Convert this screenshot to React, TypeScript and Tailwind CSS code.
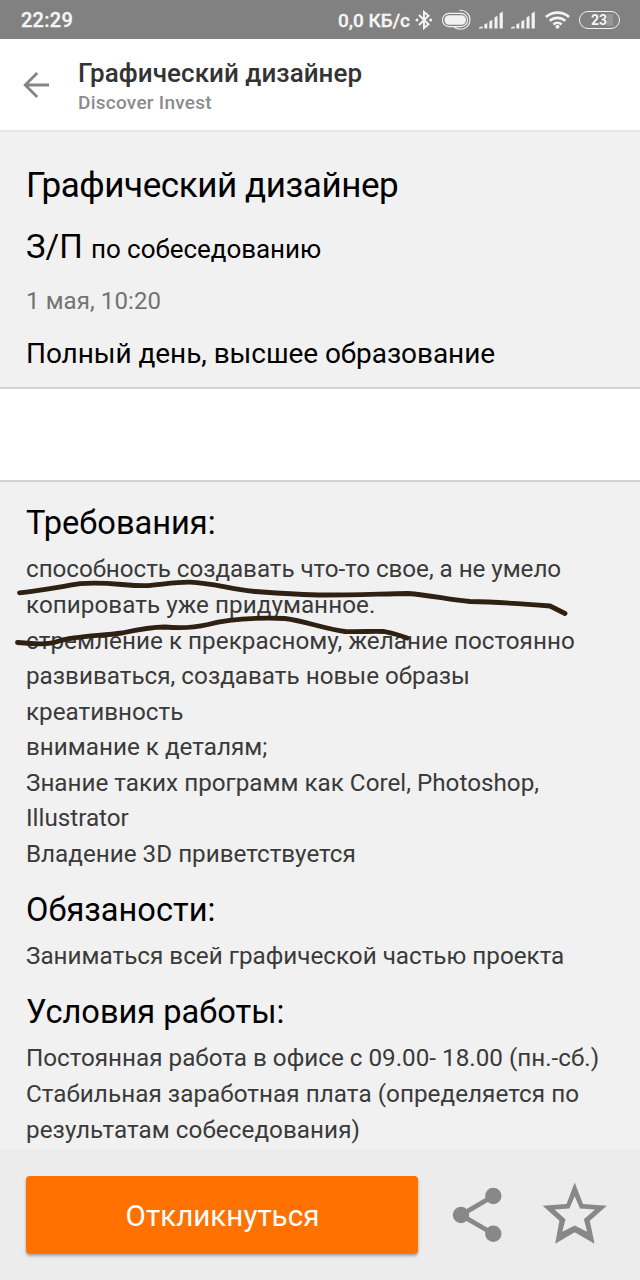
interface LineGroup {
    lines: string[];
    lineClass: string;
}

interface VacancySection {
    title: string;
    groups: LineGroup[];
}

const SECTIONS: VacancySection[] = [
    {
        title: "Требования:",
        groups: [
            {
                lines: ["способность создавать что-то свое, а не умело"],
                lineClass: "leading-[36px] tracking-[-0.06px]",
            },
            {
                lines: [
                    "копировать уже придуманное.",
                    "стремление к прекрасному, желание постоянно",
                ],
                lineClass: "leading-[36px] tracking-[0.04px]",
            },
            {
                lines: [
                    "развиваться, создавать новые образы",
                    "креативность",
                    "внимание к деталям;",
                    "Знание таких программ как Corel, Photoshop,",
                    "Illustrator",
                    "Владение 3D приветствуется",
                ],
                lineClass: "leading-[35.5px]",
            },
        ],
    },
    {
        title: "Обязаности:",
        groups: [
            {
                lines: ["Заниматься всей графической частью проекта"],
                lineClass: "leading-[36px]",
            },
        ],
    },
    {
        title: "Условия работы:",
        groups: [
            {
                lines: ["Постоянная работа в офисе с 09.00- 18.00 (пн.-сб.)"],
                lineClass: "leading-[36px]",
            },
            {
                lines: [
                    "Стабильная заработная плата (определяется по",
                    "результатам собеседования)",
                ],
                lineClass: "leading-[36px] tracking-[0.05px]",
            },
        ],
    },
];

function SignalIcon() {
    return (
        <svg className="h-[18px] w-6 shrink-0" viewBox="0 0 24 18" fill="#f2f2f2">
            <path d="M0 17.5v-1l3.5-1.5v2.5z" />
            <path d="M5.3 13.5l3-1.5v5.5h-3zM10.3 10.5l3-1.8v8.8h-3zM15.5 6.5l3-1.8v12.8h-3zM20.6 2.5L23.8.5v17h-3.2z" />
        </svg>
    );
}

function StatusBar() {
    return (
        <div className="flex h-[39px] items-center bg-[#818181] pl-[21px] pr-[20px] text-[#f5f5f5]">
            <span className="text-[20px] font-medium leading-none tracking-[0.25px] [-webkit-text-stroke:0.3px_#f5f5f5]">22:29</span>
            <div className="ml-auto flex items-center">
                <span className="pt-px text-[19px] font-medium leading-none [-webkit-text-stroke:0.3px_#f5f5f5]">0,0 КБ/с</span>
                <svg className="ml-[5px] h-5 w-[18px] shrink-0" viewBox="0 0 18 20" fill="none" stroke="#f2f2f2" strokeWidth="2">
                    <path d="M4 5l9.5 9.2L9 18V2l4.5 3.8L4 15" />
                    <circle cx="2" cy="10" r="1.5" fill="#f2f2f2" stroke="none" />
                    <circle cx="15.7" cy="10" r="1.5" fill="#f2f2f2" stroke="none" />
                </svg>
                <svg className="ml-[8px] h-[22px] w-[30px] shrink-0" viewBox="0 0 30 22" fill="none" stroke="#f2f2f2">
                    <rect x="3.5" y="6.2" width="21.5" height="9.6" rx="4.8" fill="#f2f2f2" stroke="none" />
                    <path d="M8 4.4h12a6.6 6.6 0 010 13.2H8A6.6 6.6 0 018 4.4z" strokeWidth="1.1" />
                    <path d="M18.5 1.3c6-.4 10.5 4 10.5 9.5 0 5.3-4 9.4-9.2 9.4-3.2 0-5.3-.8-7-2.6" strokeWidth="1.1" />
                </svg>
                <div className="ml-[8px] flex gap-[8px]">
                    <SignalIcon />
                    <SignalIcon />
                </div>
                <svg className="ml-[10px] h-[18px] w-[25px] shrink-0" viewBox="0 0 25 18" fill="none" stroke="#f2f2f2" strokeWidth="2.7">
                    <path d="M.9 5.9C7.5.1 17.5.1 24.1 5.9" />
                    <path d="M4.7 9.8c4.5-4 11.1-4 15.6 0" />
                    <path d="M8.4 13.5c2.4-2.1 5.8-2.1 8.2 0" />
                    <circle cx="12.5" cy="15.7" r="2" fill="#f2f2f2" stroke="none" />
                </svg>
                <div className="ml-[9px] flex h-[18px] w-[41px] shrink-0 items-center justify-center rounded-full border-[1.5px] border-[#f2f2f2] pr-px">
                    <span className="text-[14px] font-bold leading-none">23</span>
                    <span className="-mr-[6px] h-3 w-[6px] bg-[#969696]" />
                </div>
            </div>
        </div>
    );
}

function AppHeader() {
    return (
        <header className="flex h-[93px] border-b-2 border-[#e6e6e6] bg-white pl-[23px]">
            <button type="button" className="mt-[33px] h-[26px] w-[27px]" aria-label="Назад">
                <svg className="h-[26px] w-[27px]" viewBox="0 0 27 26" fill="none" stroke="#868686" strokeWidth="2.8">
                    <path d="M26 13H2.5M14.2 1L2.2 13l12 12" />
                </svg>
            </button>
            <div className="ml-[28px] pt-[19px]">
                <h1 className="text-[26px] font-medium leading-[30px] tracking-[0.05px] text-[#333]">Графический дизайнер</h1>
                <p className="mt-[4px] text-[19px] font-medium leading-[22px] tracking-[0.25px] text-[#8c8c8c]">Discover Invest</p>
            </div>
        </header>
    );
}

function VacancySummary() {
    return (
        <section className="h-[257px] border-b-2 border-[#d2d2d2] bg-[#f1f1f1] pl-[26px] pt-[32px] text-black">
            <h2 className="text-[35px] leading-[44px] tracking-[-0.43px]">Графический дизайнер</h2>
            <p className="mt-[19px] text-[33px] leading-[40px]">
                З/П <span className="text-[26px] tracking-[-0.05px]">по собеседованию</span>
            </p>
            <p className="mt-[16px] text-[24px] leading-[32px] tracking-[0.1px] text-[#737373]">1 мая, 10:20</p>
            <p className="mt-[19px] text-[28px] leading-[36px] tracking-[-0.06px]">Полный день, высшее образование</p>
        </section>
    );
}

// strokes drawn by hand over the first requirements
function PenMarks() {
    return (
        <svg
            className="pointer-events-none absolute left-0 top-0 h-[188px] w-[640px]"
            viewBox="0 482 640 188"
            fill="none"
            stroke="#2f2014"
            strokeWidth="4.8"
            strokeLinecap="round"
            strokeLinejoin="round"
        >
            <path d="M19.5 592.8C42 590.5 62 586.5 80 583.7C108 581.5 125 586 145 585.7C162 584.5 175 582 190 582.2C212 583 232 589.5 255 591.5C282 593.5 300 594.8 325 595C350 595 380 594 408 593.5C430 595 450 600 470 601.5C498 602 525 604 550 606L565 613.5" />
            <path d="M17.5 642.5C35 644 48 645 59 641C76 636 100 636 122 633C138 629.5 150 627 165 627C182 628.5 195 627.5 208 624.5C230 618.5 255 617.5 285 618.5C305 621 325 629 345 631.5C360 632 372 631 384 631.5Q397 634 407 638" />
        </svg>
    );
}

function VacancyDetails() {
    return (
        <section className="relative h-[669px] overflow-hidden border-t-2 border-[#d2d2d2] bg-[#f1f1f1] pl-[26px] pt-[21px]">
            {SECTIONS.map((section) => (
                <div key={section.title} className="mb-[18px]">
                    <h3 className="mb-[8px] text-[32.6px] leading-[40px] text-black">{section.title}</h3>
                    {section.groups.map((group) => (
                        <div key={group.lines[0]} className={`text-[24.24px] text-[#3a3a3a] ${group.lineClass}`}>
                            {group.lines.map((line) => (
                                <p key={line} className="whitespace-nowrap">{line}</p>
                            ))}
                        </div>
                    ))}
                </div>
            ))}
            <PenMarks />
        </section>
    );
}

function ActionBar() {
    return (
        <footer className="flex h-[131px] bg-[#ececec] pl-[26px] pt-[27px]">
            <button
                type="button"
                className="h-[78px] w-[392px] rounded-[4px] bg-[#ff7100] pl-px pt-[3px] text-[29.6px] text-white shadow-[0_2px_3px_rgba(0,0,0,0.3)]"
            >
                Откликнуться
            </button>
            <button type="button" className="ml-[34px] mt-[11px] h-[56px] w-[50px]" aria-label="Поделиться">
                <svg className="h-[56px] w-[50px]" viewBox="0 0 50 56" fill="#888" stroke="#888" strokeWidth="4.8">
                    <path d="M41.5 9L9 28l32.5 19" fill="none" />
                    <circle cx="41.3" cy="9" r="8.2" stroke="none" />
                    <circle cx="9" cy="28" r="8.2" stroke="none" />
                    <circle cx="41.3" cy="46.8" r="8.2" stroke="none" />
                </svg>
            </button>
            <button type="button" className="ml-[40px] mt-[6px] h-[63px] w-[66px]" aria-label="В избранное">
                <svg className="h-[63px] w-[66px]" viewBox="0 0 66 63" fill="#888" fillRule="evenodd">
                    <path d="M32.7 .5L41 22L64.8 23.7L47.8 38.7L52.5 61.7L32.7 50.3L13.2 61.7L17.4 38.7L.7 23.7L24.5 22ZM32.7 14.3L27.4 26.5L12.5 27.5L23.5 37.3L20.3 49.8L32.7 43.5L45.1 49.8L41.9 37.3L53 27.5L38 26.5Z" />
                </svg>
            </button>
        </footer>
    );
}

export default function App() {
    return (
        <div className="h-[1280px] w-[640px] overflow-hidden bg-white font-['Roboto','Noto_Sans',sans-serif]">
            <StatusBar />
            <AppHeader />
            <VacancySummary />
            <div className="h-[91px] bg-white" />
            <VacancyDetails />
            <ActionBar />
        </div>
    );
}
